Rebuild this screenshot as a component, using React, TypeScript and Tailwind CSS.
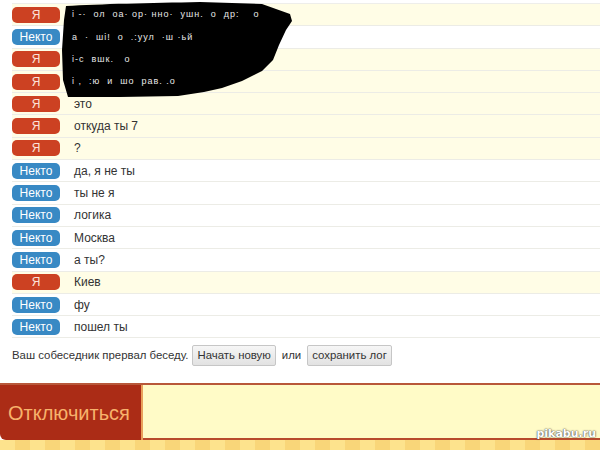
const messages: { me: boolean; text: string }[] = [
  { me: true, text: '' },
  { me: false, text: '' },
  { me: true, text: '' },
  { me: true, text: '' },
  { me: true, text: 'это' },
  { me: true, text: 'откуда ты 7' },
  { me: true, text: '?' },
  { me: false, text: 'да, я не ты' },
  { me: false, text: 'ты не я' },
  { me: false, text: 'логика' },
  { me: false, text: 'Москва' },
  { me: false, text: 'а ты?' },
  { me: true, text: 'Киев' },
  { me: false, text: 'фу' },
  { me: false, text: 'пошел ты' },
]

// white bits that show through the marker scribble
const scraps = [
  'і -·  ол  оа· ор· нно·  ушн.  о  др:    о',
  'а  ·  ші!  о  .:уул  ·ш ·ьй',
  'і-с  вшк.   о',
  'і ,  :ю  и  шо  рав. .о',
]

function Badge({ me }: { me: boolean }) {
  return (
    <span
      className={
        'w-[48px] h-[16px] rounded-[5px] flex items-center justify-center text-[12px] leading-none ' +
        (me ? 'bg-[#cc4122] text-[#fbe3da]' : 'bg-[#3889c4] text-white')
      }
    >
      {me ? 'Я' : 'Некто'}
    </span>
  )
}

function Scribble() {
  return (
    <div className="absolute left-0 top-0 w-[300px] h-[100px] pointer-events-none">
      <svg width="300" height="100" viewBox="0 0 300 100" className="absolute left-0 top-0">
        <path
          d="M66 6 C100 4 150 3 200 2 L262 4 L290 14 L292 21 L286 30 L279 45 L273 60 L262 71 L242 81 L222 88 L204 92 L178 96 L120 97 L68 97 L63 80 L62 50 L64 20 Z"
          fill="#000"
        />
      </svg>
      <div className="absolute left-[72px] top-[4px] flex flex-col">
        {scraps.map((s, i) => (
          <div
            key={i}
            className="h-[22.3px] flex items-center text-[9px] text-[#e8e8e8] whitespace-pre tracking-[1px]"
          >
            {s}
          </div>
        ))}
      </div>
    </div>
  )
}

export default function App() {
  return (
    <div className="w-[600px] h-[450px] bg-white overflow-hidden flex flex-col font-['Liberation_Sans',Arial,sans-serif] text-[#333]">
      <div className="relative pt-[3px]">
        <div className="ml-[12px] border-t border-[#eeeeea]">
          {messages.map((m, i) => (
            <div
              key={i}
              className={
                'h-[22.3px] border-b border-[#ececE6] flex items-center ' +
                (m.me ? 'bg-[#fffde6]' : 'bg-white')
              }
            >
              <Badge me={m.me} />
              <span className="ml-[14px] text-[12px]">{m.text}</span>
            </div>
          ))}
        </div>
        <Scribble />
      </div>

      <div className="flex items-center pl-[12px] mt-[6px] h-[23px] text-[11.4px]">
        <span>Ваш собеседник прервал беседу.</span>
        <button className="ml-[4px] h-[21px] px-[4px] border border-[#c6c6c6] rounded-[2px] bg-gradient-to-b from-[#f6f6f6] to-[#e2e2e2] text-[11.4px] text-[#333]">
          Начать новую
        </button>
        <span className="mx-[6px]">или</span>
        <button className="h-[21px] px-[4px] border border-[#c6c6c6] rounded-[2px] bg-gradient-to-b from-[#f6f6f6] to-[#e2e2e2] text-[11.4px] text-[#333]">
          сохранить лог
        </button>
      </div>

      <div className="mt-[16px] border-t-2 border-[#b8583a] flex h-[57px]">
        <div className="w-[143px] bg-[#ab2c16] rounded-bl-[6px] flex items-center pl-[8px] text-[20px] text-[#f7b26c] border-r-2 border-[#e9a05c]">
          Отключиться
        </div>
        <div className="flex-1 bg-[#fffbc7] border-b-2 border-[#b84a2c]"></div>
      </div>

      <div className="flex-1 bg-[repeating-linear-gradient(90deg,#fde38d_0px,#fde38d_15px,#f9d679_15px,#f9d679_30px)] relative">
        <span className="absolute right-[4px] -top-[14px] text-[11px] font-bold text-white [text-shadow:0_0_2px_#555,0_0_1px_#333] font-['DejaVu_Sans',sans-serif]">
          pikabu.ru
        </span>
      </div>
    </div>
  )
}
